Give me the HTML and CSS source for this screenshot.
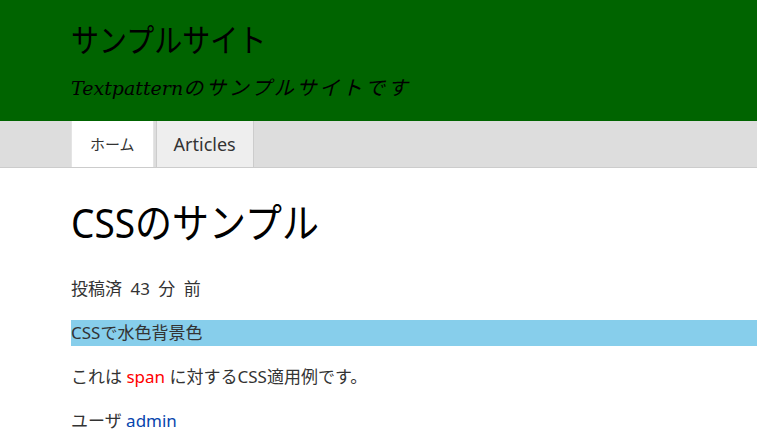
FILE: index.html
```html
<!DOCTYPE html>
<html lang="ja">
<head>
    <meta charset="UTF-8">
    <meta name="viewport" content="width=device-width, initial-scale=1.0">
    <title>サンプルサイト</title>
    <link rel="stylesheet" href="styles.css">
</head>
<body>
    <header class="site-header">
        <div class="wrap">
            <h1 class="site-name">サンプルサイト</h1>
            <p class="site-slogan"><span class="latin">Textpattern</span>のサンプルサイトです</p>
        </div>
    </header>
    <nav class="site-nav">
        <div class="wrap">
            <ul class="nav-list">
                <li class="nav-item active">ホーム</li>
                <li class="nav-item">Articles</li>
            </ul>
        </div>
    </nav>
    <main class="wrap content">
        <h2 class="article-title">CSSのサンプル</h2>
        <p class="meta">投稿済 43 分 前</p>
        <p class="skyblue">CSSで水色背景色</p>
        <p>これは <span class="red">span</span> に対するCSS適用例です。</p>
        <p>ユーザ <a href="#" class="author">admin</a></p>
    </main>
</body>
</html>
```
FILE: styles.css
```css
body {
    margin: 0;
    font-family: "Noto Sans", "Noto Sans CJK JP", sans-serif;
    color: #333;
    font-size: 16px;
    background: #fff;
}
.wrap {
    padding-left: 71px;
}
.site-header {
    background: #006400;
    height: 121px;
    box-sizing: border-box;
    padding-top: 14px;
}
.site-name {
    margin: 0;
    font-size: 28px;
    font-weight: normal;
    color: #000;
    line-height: 50px;
    transform: scaleY(1.15);
    transform-origin: left center;
}
.site-slogan {
    margin: 8px 0 0;
    font-family: "Noto Sans CJK JP", serif;
    font-style: italic;
    font-size: 20px;
    letter-spacing: 2.8px;
    color: #000;
    line-height: 30px;
}
.site-slogan .latin {
    font-family: "DejaVu Serif", "Liberation Serif", serif;
    font-size: 19px;
    letter-spacing: 0;
}
.site-nav {
    background: #ddd;
    border-bottom: 1px solid #ccc;
    height: 46px;
}
.nav-list {
    list-style: none;
    margin: 0;
    padding: 0;
    display: flex;
    gap: 2px;
}
.nav-item {
    height: 46px;
    line-height: 46px;
    padding: 0 17px;
    background: #eee;
    border-left: 1px solid #ccc;
    border-right: 1px solid #ccc;
    font-size: 18px;
    color: #333;
}
.nav-item.active {
    background: #fff;
    border-color: #e4e4e4;
    font-size: 15px;
    padding: 0 18px;
}
.content {
    padding-top: 27px;
}
.article-title {
    margin: 0 0 25px;
    font-size: 37px;
    font-weight: normal;
    color: #000;
    line-height: 56px;
    transform: scaleY(1.1);
    transform-origin: left center;
}
.content p {
    margin: 0 0 18px;
    line-height: 26px;
    font-size: 17px;
}
.meta {
    word-spacing: 4px;
}
.skyblue {
    background: #87ceeb;
}
.red {
    color: #f00;
}
.author {
    color: #0645ad;
    text-decoration: none;
}
```
